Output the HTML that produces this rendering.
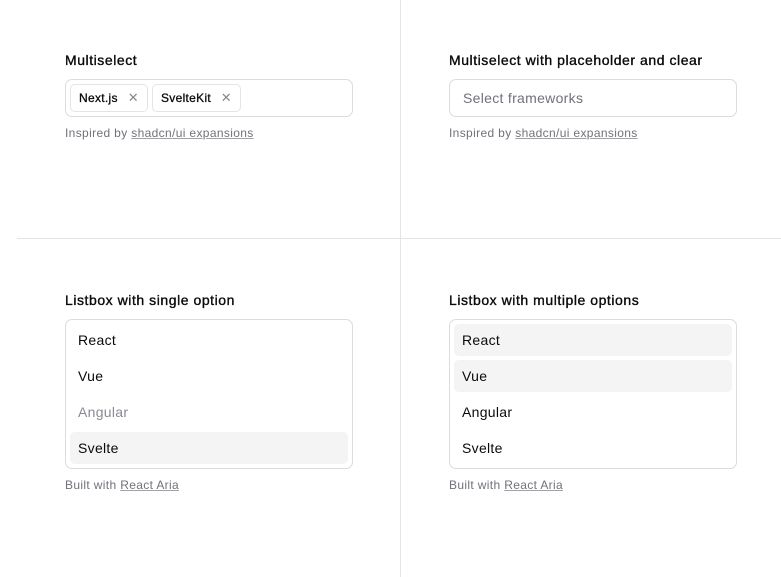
<!DOCTYPE html><html><head><style>
body{margin:0;width:781px;height:577px;background:#fff;font-family:"Liberation Sans",sans-serif;position:relative;overflow:hidden;color:#0a0a0a}
.a{position:absolute}
.t{font-size:14px;font-weight:400;-webkit-text-stroke:0.35px #0a0a0a;letter-spacing:0.55px}
.c{font-size:12px;color:#71717a;letter-spacing:0.35px}
.c u{color:#71717a;text-decoration-color:#a1a1aa}
.box{border:1px solid #dcdcdf;border-radius:7px;box-sizing:border-box}
.tag{position:absolute;top:4px;height:28px;border:1px solid #e4e4e7;border-radius:5px;box-sizing:border-box;font-size:12px;line-height:26px;padding-left:8px;-webkit-text-stroke:0.3px #0a0a0a;letter-spacing:0.3px}
.tag span{position:absolute;right:8px;color:#888;font-size:13px;-webkit-text-stroke:0}
.it{position:absolute;left:4px;right:4px;height:32px;border-radius:5px;font-size:14px;line-height:32px;padding-left:8px;letter-spacing:0.3px}
.sel{background:#f4f4f5}
</style></head><body>
<div class="a" style="left:400px;top:0;width:1px;height:577px;background:#e4e4e7"></div>
<div class="a" style="left:17px;top:238px;width:764px;height:1px;background:#e4e4e7"></div>

<div class="a t" style="left:65px;top:52px">Multiselect</div>
<div class="a box" style="left:65px;top:79px;width:288px;height:38px">
<div class="tag" style="left:4px;width:78px">Next.js<span>✕</span></div>
<div class="tag" style="left:86px;width:89px">SvelteKit<span>✕</span></div>
</div>
<div class="a c" style="left:65px;top:126px">Inspired by <u>shadcn/ui expansions</u></div>

<div class="a t" style="left:449px;top:52px">Multiselect with placeholder and clear</div>
<div class="a box" style="left:449px;top:79px;width:288px;height:38px;font-size:14px;color:#71717a;line-height:36px;padding-left:13px;letter-spacing:0.3px">Select frameworks</div>
<div class="a c" style="left:449px;top:126px">Inspired by <u>shadcn/ui expansions</u></div>

<div class="a t" style="left:65px;top:292px">Listbox with single option</div>
<div class="a box" style="left:65px;top:319px;width:288px;height:150px">
<div class="it" style="top:4px">React</div>
<div class="it" style="top:40px">Vue</div>
<div class="it" style="top:76px;color:#8a8a90">Angular</div>
<div class="it sel" style="top:112px">Svelte</div>
</div>
<div class="a c" style="left:65px;top:478px">Built with <u>React Aria</u></div>

<div class="a t" style="left:449px;top:292px">Listbox with multiple options</div>
<div class="a box" style="left:449px;top:319px;width:288px;height:150px">
<div class="it sel" style="top:4px">React</div>
<div class="it sel" style="top:40px">Vue</div>
<div class="it" style="top:76px">Angular</div>
<div class="it" style="top:112px">Svelte</div>
</div>
<div class="a c" style="left:449px;top:478px">Built with <u>React Aria</u></div>
</body></html>
